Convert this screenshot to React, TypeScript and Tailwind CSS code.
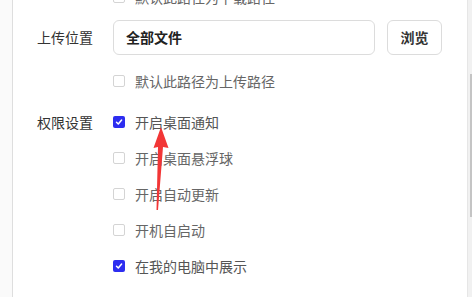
import React from "react";

const font = { fontFamily: '"Noto Sans CJK SC", "Noto Sans", sans-serif' };

function Box({ checked }: { checked?: boolean }) {
  if (checked) {
    return (
      <span className="flex h-[12px] w-[12px] shrink-0 items-center justify-center rounded-[2px] bg-[#2d2df0]">
        <svg width="8" height="8" viewBox="0 0 8 8">
          <path d="M1.5 4.2 L3.3 6 L6.6 2" fill="none" stroke="#fff" strokeWidth="1.5" strokeLinecap="round" strokeLinejoin="round" />
        </svg>
      </span>
    );
  }
  return <span className="h-[12px] w-[12px] shrink-0 rounded-[2px] border border-[#d4d4d4] bg-white" />;
}

function Opt({ text, checked }: { text: string; checked?: boolean }) {
  return (
    <div className="flex h-[36px] items-center gap-[10px]">
      <Box checked={checked} />
      <span className={`text-[14px] leading-none ${checked ? "text-[#555]" : "text-[#666]"}`}>{text}</span>
    </div>
  );
}

export default function App() {
  return (
    <div className="relative flex h-[297px] w-[472px] overflow-hidden bg-white" style={font}>
      <div className="w-[13px] shrink-0 bg-[#fafafa] border-r border-[#dedede]" />
      <div className="flex-1 pl-[24px]">
        <div className="mt-[-21px] flex">
          <div className="w-[76px] shrink-0" />
          <Opt text="默认此路径为下载路径" />
        </div>
        <div className="mt-[5px] flex h-[35px] items-center">
          <div className="w-[76px] shrink-0 text-[14px] text-[#333]">上传位置</div>
          <div className="flex h-[35px] w-[262px] items-center rounded-[6px] border border-[#dcdcdc] px-[12px] text-[14px] font-bold text-[#222]">
            全部文件
          </div>
          <div className="ml-[12px] flex h-[35px] w-[55px] items-center justify-center rounded-[6px] border border-[#dcdcdc] text-[14px] font-bold text-[#333]">
            浏览
          </div>
        </div>
        <div className="mt-[8px] flex">
          <div className="w-[76px] shrink-0" />
          <Opt text="默认此路径为上传路径" />
        </div>
        <div className="mt-[5px] flex">
          <div className="flex h-[36px] w-[76px] shrink-0 items-center text-[14px] text-[#333]">权限设置</div>
          <div className="flex flex-col">
            <Opt text="开启桌面通知" checked />
            <Opt text="开启桌面悬浮球" />
            <Opt text="开启自动更新" />
            <Opt text="开机自启动" />
            <Opt text="在我的电脑中展示" checked />
          </div>
        </div>
      </div>
      <div className="flex w-[5px] shrink-0 flex-col border-l border-[#e6e6e6] bg-[#f1f1f1]">
        <div className="ml-auto mt-[74px] h-[143px] w-[2px] bg-[#c4c4c4]" />
      </div>
      <svg className="pointer-events-none absolute left-0 top-0" width="472" height="297">
        <polygon
          points="161,127 168.5,148 163,147 158,210 156.5,210 158,147 153.5,148"
          fill="#f23636"
        />
      </svg>
    </div>
  );
}
